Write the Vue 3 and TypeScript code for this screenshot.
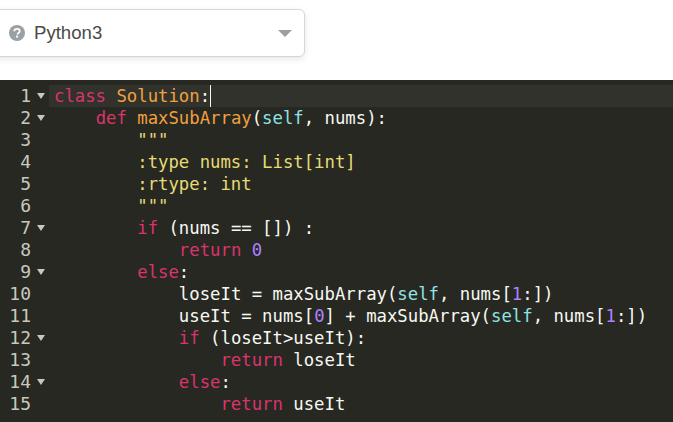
<script setup lang="ts">
type Tok = [string, string?];
const lines: { tokens: Tok[]; fold?: boolean }[] = [
  { fold: true, tokens: [['class', 'k'], [' '], ['Solution', 'f'], [':', 'p']] },
  { fold: true, tokens: [['    '], ['def', 'k'], [' '], ['maxSubArray', 'f'], ['(', 'p'], ['self', 'c'], [', nums):', 'p']] },
  { tokens: [['        '], ['"""', 's']] },
  { tokens: [['        '], [':type nums: List[int]', 's']] },
  { tokens: [['        '], [':rtype: int', 's']] },
  { tokens: [['        '], ['"""', 's']] },
  { fold: true, tokens: [['        '], ['if', 'k'], [' (nums == []) :', 'p']] },
  { tokens: [['            '], ['return', 'k'], [' '], ['0', 'n']] },
  { fold: true, tokens: [['        '], ['else', 'k'], [':', 'p']] },
  { tokens: [['            '], ['loseIt = maxSubArray(', 'p'], ['self', 'c'], [', nums[', 'p'], ['1', 'n'], [':])', 'p']] },
  { tokens: [['            '], ['useIt = nums[', 'p'], ['0', 'n'], ['] + maxSubArray(', 'p'], ['self', 'c'], [', nums[', 'p'], ['1', 'n'], [':])', 'p']] },
  { fold: true, tokens: [['            '], ['if', 'k'], [' (loseIt>useIt):', 'p']] },
  { tokens: [['                '], ['return', 'k'], [' loseIt', 'p']] },
  { fold: true, tokens: [['            '], ['else', 'k'], [':', 'p']] },
  { tokens: [['                '], ['return', 'k'], [' useIt', 'p']] },
];
</script>

<template>
  <div class="page">
    <div class="top">
      <div class="select">
        <svg class="help" width="16" height="16" viewBox="0 0 16 16">
          <circle cx="8" cy="8" r="8" fill="#9aa0a3" />
          <path d="M5.3 6.2C5.4 4.7 6.5 3.9 8 3.9c1.6 0 2.7.9 2.7 2.2 0 1-.5 1.5-1.3 2-.7.4-.9.7-.9 1.4" fill="none" stroke="#fff" stroke-width="1.8" />
          <rect x="7.1" y="10.6" width="2" height="2" fill="#fff" />
        </svg>
        <span class="label">Python3</span>
        <span class="caret"></span>
      </div>
    </div>
    <div class="editor">
      <div v-for="(line, i) in lines" :key="i" class="row" :class="{ first: i === 0 }">
        <div class="gutter">
          <span class="num">{{ i + 1 }}</span>
          <span class="fold"><i v-if="line.fold"></i></span>
        </div>
        <div class="code">
          <span v-for="(t, j) in line.tokens" :key="j" :class="t[1]">{{ t[0] }}</span>
          <span v-if="i === 0" class="cursor"></span>
        </div>
      </div>
    </div>
  </div>
</template>

<style>
html, body { margin: 0; background: #fff; overflow: hidden; }
</style>

<style scoped>
.page { width: 673px; height: 422px; overflow: hidden; display: flex; flex-direction: column; }
.top { height: 80px; box-sizing: border-box; padding-top: 9px; background: #fff; }
.select {
  width: 315px; height: 48px; margin-left: -10px; box-sizing: border-box;
  border: 1px solid #d4d6d8; border-radius: 6px; background: #fff;
  box-shadow: 0 2px 6px rgba(0,0,0,.1);
  display: flex; align-items: center; padding: 0 12px 0 18px;
  color: #4a4a4a;
}
.label { margin-left: 9px; font-family: "Liberation Sans", sans-serif; font-size: 18.6px; flex: 1; margin-top: -1px; }
.caret { width: 0; height: 0; border-left: 7px solid transparent; border-right: 7px solid transparent; border-top: 7px solid #9e9e9e; }
.editor { flex: 1; background: #272822; padding-top: 5px; font-family: "DejaVu Sans Mono", monospace; font-size: 17.3px; color: #f8f8f2; }
.row { height: 22px; line-height: 22px; display: flex; white-space: pre; }
.gutter { width: 49px; flex: none; display: flex; justify-content: flex-end; color: #c8c8bf; font-size: 18px; }
.num { text-align: right; }
.fold { width: 18px; display: flex; align-items: center; justify-content: center; }
.fold i { width: 0; height: 0; border-left: 4px solid transparent; border-right: 4px solid transparent; border-top: 6px solid #c8c8bf; margin-left: 2px; }
.code { padding-left: 5px; flex: 1; display: flex; }
.first .code { background: #31322c; }
.k { color: #d9346c; }
.f { color: #f0a040; }
.c { color: #8fe3e3; }
.s { color: #e6db74; }
.n { color: #ae81ff; }
.p { color: #f8f8f2; }
.cursor { width: 1px; height: 22px; background: #f8f8f0; }
</style>
